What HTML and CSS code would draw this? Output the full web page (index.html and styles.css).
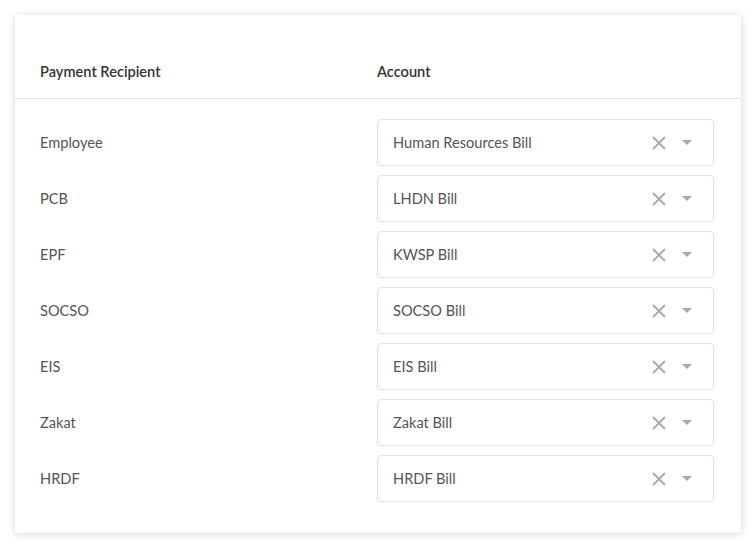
FILE: index.html
```html
<!DOCTYPE html>
<html>
<head>
<meta charset="utf-8">
<link rel="stylesheet" href="styles.css">
</head>
<body>
<div class="card">
  <div class="head">
    <div class="hcell">Payment Recipient</div>
    <div class="hcell">Account</div>
  </div>
  <div class="rows">
    <div class="row"><div class="label">Employee</div><div class="select"><span class="val">Human Resources Bill</span><span class="icons"><svg class="x" viewBox="0 0 16 16"><path d="M2 2L14 14M14 2L2 14"/></svg><svg class="caret" viewBox="0 0 10 6"><path d="M0 0H10L5 5Z"/></svg></span></div></div>
    <div class="row"><div class="label">PCB</div><div class="select"><span class="val">LHDN Bill</span><span class="icons"><svg class="x" viewBox="0 0 16 16"><path d="M2 2L14 14M14 2L2 14"/></svg><svg class="caret" viewBox="0 0 10 6"><path d="M0 0H10L5 5Z"/></svg></span></div></div>
    <div class="row"><div class="label">EPF</div><div class="select"><span class="val">KWSP Bill</span><span class="icons"><svg class="x" viewBox="0 0 16 16"><path d="M2 2L14 14M14 2L2 14"/></svg><svg class="caret" viewBox="0 0 10 6"><path d="M0 0H10L5 5Z"/></svg></span></div></div>
    <div class="row"><div class="label">SOCSO</div><div class="select"><span class="val">SOCSO Bill</span><span class="icons"><svg class="x" viewBox="0 0 16 16"><path d="M2 2L14 14M14 2L2 14"/></svg><svg class="caret" viewBox="0 0 10 6"><path d="M0 0H10L5 5Z"/></svg></span></div></div>
    <div class="row"><div class="label">EIS</div><div class="select"><span class="val">EIS Bill</span><span class="icons"><svg class="x" viewBox="0 0 16 16"><path d="M2 2L14 14M14 2L2 14"/></svg><svg class="caret" viewBox="0 0 10 6"><path d="M0 0H10L5 5Z"/></svg></span></div></div>
    <div class="row"><div class="label">Zakat</div><div class="select"><span class="val">Zakat Bill</span><span class="icons"><svg class="x" viewBox="0 0 16 16"><path d="M2 2L14 14M14 2L2 14"/></svg><svg class="caret" viewBox="0 0 10 6"><path d="M0 0H10L5 5Z"/></svg></span></div></div>
    <div class="row"><div class="label">HRDF</div><div class="select"><span class="val">HRDF Bill</span><span class="icons"><svg class="x" viewBox="0 0 16 16"><path d="M2 2L14 14M14 2L2 14"/></svg><svg class="caret" viewBox="0 0 10 6"><path d="M0 0H10L5 5Z"/></svg></span></div></div>
  </div>
</div>
</body>
</html>
```

FILE: styles.css
```css
html, body {
  margin: 0;
  padding: 0;
  background: #ffffff;
}
body {
  padding: 15px;
  font-family: "Lato", "Noto Sans", sans-serif;
}
.card {
  width: 726px;
  height: 518px;
  box-sizing: border-box;
  background: #fff;
  box-shadow: 0 1px 8px rgba(0,0,0,0.16);
}
.head {
  display: grid;
  grid-template-columns: 337px 337px;
  padding: 0 27px 0 25px;
  height: 83px;
  align-items: end;
  border-bottom: 1px solid #e4e4e4;
}
.hcell {
  font-size: 14.6px;
  font-weight: 600;
  color: #333;
  padding-bottom: 18px;
}
.rows {
  padding: 20px 27px 0 25px;
  display: flex;
  flex-direction: column;
  gap: 9px;
}
.row {
  display: grid;
  grid-template-columns: 337px 337px;
  align-items: center;
}
.label {
  font-size: 14.6px;
  color: #555;
}
.select {
  height: 47px;
  box-sizing: border-box;
  border: 1px solid #e3e3e3;
  border-radius: 4px;
  display: flex;
  align-items: center;
  justify-content: space-between;
  padding: 0 21px 0 15px;
}
.val {
  font-size: 14.6px;
  color: #555;
}
.icons {
  display: flex;
  align-items: center;
  gap: 15px;
}
.x {
  width: 16px;
  height: 16px;
  stroke: #a8a8a8;
  stroke-width: 1.8;
  fill: none;
}
.caret {
  width: 10px;
  height: 6px;
  fill: #a8a8a8;
}
```
